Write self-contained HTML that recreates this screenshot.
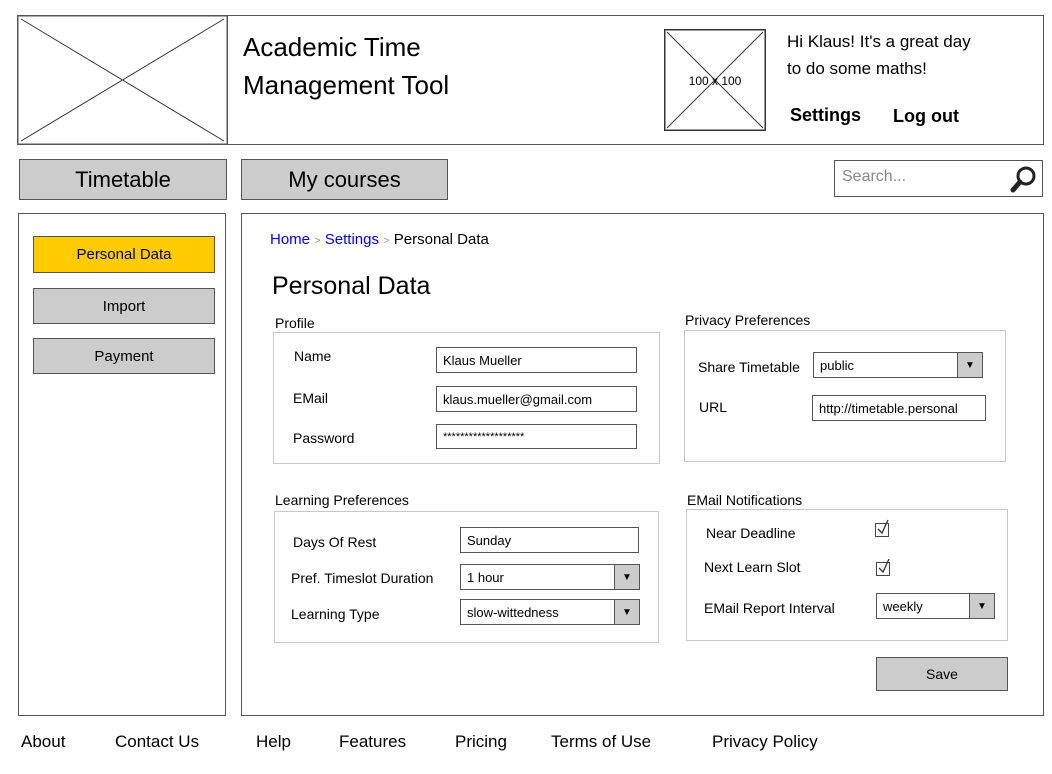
<!DOCTYPE html>
<html><head><meta charset="utf-8"><style>
*{margin:0;padding:0;box-sizing:border-box}
body{width:1052px;height:774px;background:#fff;position:relative;overflow:hidden;font-family:"Liberation Sans",sans-serif;color:#000}
.a{position:absolute;white-space:nowrap}
.bx{position:absolute;border:1.5px solid #555}
.gb{position:absolute;border:1.5px solid #c8c8c8}
.in{position:absolute;border:1.5px solid #555;background:#fff;font-size:13px;padding-left:6px;display:flex;align-items:center;overflow:hidden;white-space:nowrap}
.sel .ar{position:absolute;right:0;top:0;bottom:0;width:25px;background:#ccc;border-left:1.5px solid #555;display:flex;align-items:center;justify-content:center;font-size:10px}
.btn{position:absolute;border:1.5px solid #555;background:#ccc;display:flex;align-items:center;justify-content:center}
.lb{font-size:14px}
.cb{position:absolute;width:14px;height:14px;border:1.5px solid #444;background:#fff}
</style></head><body>
<div class="bx" style="left:17px;top:15px;width:1027px;height:130px"></div>
<svg class="a" style="left:17px;top:15px" width="211" height="130"><rect x="0.75" y="0.75" width="209.5" height="128.5" fill="none" stroke="#555" stroke-width="1.5"/><line x1="4" y1="4" x2="207" y2="126" stroke="#333"/><line x1="207" y1="4" x2="4" y2="126" stroke="#333"/></svg>
<div class="a" style="left:243px;top:28px;font-size:26px;line-height:38px">Academic Time<br>Management Tool</div>
<svg class="a" style="left:664px;top:29px" width="102" height="102"><rect x="0.75" y="0.75" width="100.5" height="100.5" fill="#fff" stroke="#333" stroke-width="1.5"/><line x1="3" y1="3" x2="99" y2="99" stroke="#333"/><line x1="99" y1="3" x2="3" y2="99" stroke="#333"/><text x="51" y="56" font-size="12" text-anchor="middle" font-family="Liberation Sans">100 x 100</text></svg>
<div class="a" style="left:787px;top:28px;font-size:17px;line-height:27px">Hi Klaus! It's a great day<br>to do some maths!</div>
<div class="a" style="left:790px;top:105px;font-size:18px;font-weight:bold">Settings</div>
<div class="a" style="left:893px;top:106px;font-size:18px;font-weight:bold">Log out</div>

<div class="btn" style="left:19px;top:159px;width:208px;height:41px;font-size:22px">Timetable</div>
<div class="btn" style="left:241px;top:159px;width:207px;height:41px;font-size:22px">My courses</div>
<div class="bx" style="left:834px;top:160px;width:209px;height:37px;background:#fff"></div>
<div class="a" style="left:842px;top:168px;font-size:16px;color:#888">Search...</div>
<svg class="a" style="left:1008px;top:164px" width="32" height="30"><circle cx="18" cy="12" r="8" fill="none" stroke="#222" stroke-width="3"/><line x1="12" y1="18" x2="5" y2="26" stroke="#222" stroke-width="5" stroke-linecap="round"/></svg>

<div class="bx" style="left:18px;top:213px;width:208px;height:503px"></div>
<div class="btn" style="left:33px;top:236px;width:182px;height:37px;background:#ffcc00;font-size:15px">Personal Data</div>
<div class="btn" style="left:33px;top:288px;width:182px;height:36px;font-size:15px">Import</div>
<div class="btn" style="left:33px;top:338px;width:182px;height:36px;font-size:15px">Payment</div>

<div class="bx" style="left:241px;top:213px;width:803px;height:503px"></div>
<div class="a" style="left:270px;top:231px;font-size:15px"><span style="color:#00f">Home</span> <span style="color:#999;font-size:11px">&gt;</span> <span style="color:#00f">Settings</span> <span style="color:#999;font-size:11px">&gt;</span> Personal Data</div>
<div class="a" style="left:272px;top:272px;font-size:25px">Personal Data</div>

<div class="a lb" style="left:275px;top:315px">Profile</div>
<div class="gb" style="left:273px;top:332px;width:387px;height:132px"></div>
<div class="a lb" style="left:294px;top:348px">Name</div>
<div class="in" style="left:436px;top:347px;width:201px;height:26px">Klaus Mueller</div>
<div class="a lb" style="left:293px;top:390px">EMail</div>
<div class="in" style="left:436px;top:386px;width:201px;height:26px">klaus.mueller@gmail.com</div>
<div class="a lb" style="left:293px;top:430px">Password</div>
<div class="in" style="left:436px;top:424px;width:201px;height:25px;font-size:11px">*******************</div>

<div class="a lb" style="left:685px;top:312px">Privacy Preferences</div>
<div class="gb" style="left:684px;top:330px;width:322px;height:132px"></div>
<div class="a lb" style="left:698px;top:359px">Share Timetable</div>
<div class="in sel" style="left:813px;top:352px;width:170px;height:26px">public<span class="ar">▼</span></div>
<div class="a lb" style="left:699px;top:399px">URL</div>
<div class="in" style="left:812px;top:395px;width:174px;height:26px">http://timetable.personal</div>

<div class="a lb" style="left:275px;top:492px">Learning Preferences</div>
<div class="gb" style="left:274px;top:511px;width:385px;height:132px"></div>
<div class="a lb" style="left:293px;top:534px">Days Of Rest</div>
<div class="in" style="left:460px;top:527px;width:179px;height:26px">Sunday</div>
<div class="a lb" style="left:291px;top:570px">Pref. Timeslot Duration</div>
<div class="in sel" style="left:460px;top:564px;width:180px;height:26px">1 hour<span class="ar">▼</span></div>
<div class="a lb" style="left:291px;top:606px">Learning Type</div>
<div class="in sel" style="left:460px;top:599px;width:180px;height:26px">slow-wittedness<span class="ar">▼</span></div>

<div class="a lb" style="left:687px;top:492px">EMail Notifications</div>
<div class="gb" style="left:686px;top:509px;width:322px;height:132px"></div>
<div class="a lb" style="left:706px;top:525px">Near Deadline</div>
<div class="cb" style="left:875px;top:523px"></div>
<svg class="a" style="left:875px;top:518px" width="16" height="20"><polyline points="3,11 7,15 13,2" fill="none" stroke="#333" stroke-width="1.3"/></svg>
<div class="a lb" style="left:704px;top:559px">Next Learn Slot</div>
<div class="cb" style="left:876px;top:562px"></div>
<svg class="a" style="left:876px;top:557px" width="16" height="20"><polyline points="3,11 7,15 13,2" fill="none" stroke="#333" stroke-width="1.3"/></svg>
<div class="a lb" style="left:704px;top:600px">EMail Report Interval</div>
<div class="in sel" style="left:876px;top:593px;width:119px;height:26px">weekly<span class="ar">▼</span></div>

<div class="btn" style="left:876px;top:657px;width:132px;height:34px;font-size:14px">Save</div>

<div class="a" style="left:21px;top:732px;font-size:17px">About</div>
<div class="a" style="left:115px;top:732px;font-size:17px">Contact Us</div>
<div class="a" style="left:256px;top:732px;font-size:17px">Help</div>
<div class="a" style="left:339px;top:732px;font-size:17px">Features</div>
<div class="a" style="left:455px;top:732px;font-size:17px">Pricing</div>
<div class="a" style="left:551px;top:732px;font-size:17px">Terms of Use</div>
<div class="a" style="left:712px;top:732px;font-size:17px">Privacy Policy</div>
</body></html>
